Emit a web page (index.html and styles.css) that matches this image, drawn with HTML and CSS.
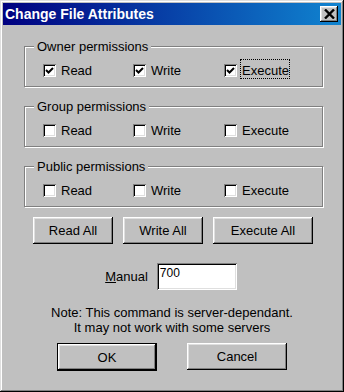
FILE: index.html
```html
<!DOCTYPE html>
<html>
<head>
<meta charset="utf-8">
<link rel="stylesheet" href="styles.css">
</head>
<body>
<div class="window">
  <div class="titlebar">
    <span class="title">Change File Attributes</span>
    <span class="close">
      <svg width="11" height="10" viewBox="0 0 11 10"><path d="M1 0.5 L10 9.5 M10 0.5 L1 9.5" stroke="#000" stroke-width="2.4" fill="none"/></svg>
    </span>
  </div>

  <div class="group group-first">
    <span class="caption">Owner permissions</span>
    <div class="row">
      <label class="cb"><span class="box checked"><svg width="9" height="9" viewBox="0 0 9 9"><path d="M1 4 L3.5 6.5 L8 2" stroke="#000" stroke-width="2" fill="none"/></svg></span><span class="txt">Read</span></label>
      <label class="cb"><span class="box checked"><svg width="9" height="9" viewBox="0 0 9 9"><path d="M1 4 L3.5 6.5 L8 2" stroke="#000" stroke-width="2" fill="none"/></svg></span><span class="txt">Write</span></label>
      <label class="cb"><span class="box checked"><svg width="9" height="9" viewBox="0 0 9 9"><path d="M1 4 L3.5 6.5 L8 2" stroke="#000" stroke-width="2" fill="none"/></svg></span><span class="txt focus">Execute</span></label>
    </div>
  </div>

  <div class="group">
    <span class="caption">Group permissions</span>
    <div class="row">
      <label class="cb"><span class="box"></span><span class="txt">Read</span></label>
      <label class="cb"><span class="box"></span><span class="txt">Write</span></label>
      <label class="cb"><span class="box"></span><span class="txt">Execute</span></label>
    </div>
  </div>

  <div class="group">
    <span class="caption">Public permissions</span>
    <div class="row">
      <label class="cb"><span class="box"></span><span class="txt">Read</span></label>
      <label class="cb"><span class="box"></span><span class="txt">Write</span></label>
      <label class="cb"><span class="box"></span><span class="txt">Execute</span></label>
    </div>
  </div>

  <div class="btnrow">
    <button class="btn w80">Read All</button>
    <button class="btn w80">Write All</button>
    <button class="btn w100">Execute All</button>
  </div>

  <div class="manual">
    <span class="mlabel"><u>M</u>anual</span>
    <input class="field" type="text" value="700">
  </div>

  <div class="note">Note: This command is server-dependant.<br>It may not work with some servers</div>

  <div class="okrow">
    <button class="btn w100 default">OK</button>
    <button class="btn w100">Cancel</button>
  </div>
</div>
</body>
</html>
```

FILE: styles.css
```css
html, body {
  margin: 0;
  padding: 0;
  background: #c0c0c0;
}

.window {
  width: 344px;
  height: 392px;
  box-sizing: border-box;
  background: #c0c0c0;
  box-shadow: inset -1px -1px 0 #000, inset 1px 1px 0 #dfdfdf, inset -2px -2px 0 #808080, inset 2px 2px 0 #fff;
  font-family: "Liberation Sans", Arial, sans-serif;
  font-size: 13px;
  line-height: 15px;
  color: #000;
  display: flex;
  flex-direction: column;
  overflow: hidden;
}

.titlebar {
  margin: 3px 3px 0 3px;
  height: 22px;
  background: linear-gradient(to right, #000080, #1084d0);
  display: flex;
  align-items: center;
  justify-content: space-between;
  padding: 0 3px 0 2px;
}

.title {
  color: #fff;
  font-weight: bold;
  font-size: 14px;
  line-height: 16px;
}

.close {
  width: 18px;
  height: 16px;
  box-sizing: border-box;
  background: #c0c0c0;
  box-shadow: inset -1px -1px 0 #000, inset 1px 1px 0 #fff, inset -2px -2px 0 #808080, inset 2px 2px 0 #dfdfdf;
  display: flex;
  align-items: center;
  justify-content: center;
  padding-left: 1px;
}

.close svg { display: block; }

.group {
  position: relative;
  margin: 19px 0 0 24px;
  width: 299px;
  height: 41px;
  box-sizing: border-box;
  border: 1px solid #808080;
  box-shadow: 1px 1px 0 #fff, inset 1px 1px 0 #fff;
  padding: 16px 0 0 18px;
}

.group-first {
  margin-top: 21px;
}

.caption {
  position: absolute;
  top: -8px;
  left: 9px;
  padding: 0 3px;
  background: #c0c0c0;
  white-space: nowrap;
}

.row {
  display: grid;
  grid-template-columns: 90px 91px 1fr;
  height: 15px;
}

.cb {
  display: flex;
  align-items: center;
  height: 15px;
}

.box {
  width: 13px;
  height: 13px;
  box-sizing: border-box;
  background: #fff;
  box-shadow: inset 1px 1px 0 #808080, inset -1px -1px 0 #fff, inset 2px 2px 0 #000, inset -2px -2px 0 #dfdfdf;
  display: flex;
  align-items: center;
  justify-content: center;
  flex: none;
}

.box svg { display: block; }

.txt {
  margin-left: 5px;
  white-space: nowrap;
}

.txt.focus {
  padding: 4px 1px 1px 2px;
  margin: -4px -1px -1px 3px;
  outline: 1px dotted #000;
  outline-offset: -1px;
}

.btnrow {
  display: flex;
  justify-content: center;
  gap: 10px;
  margin-top: 10px;
  padding-left: 2px;
}

.btn {
  height: 27px;
  box-sizing: border-box;
  border: none;
  background: #c0c0c0;
  box-shadow: inset -1px -1px 0 #000, inset 1px 1px 0 #fff, inset -2px -2px 0 #808080, inset 2px 2px 0 #dfdfdf;
  font-family: "Liberation Sans", Arial, sans-serif;
  font-size: 13px;
  line-height: 15px;
  color: #000;
  padding: 0;
  margin: 0;
}

.w80 { width: 80px; }
.w100 { width: 100px; }

.btn.default {
  height: 28px;
  box-shadow: inset 0 0 0 1px #000, inset -2px -2px 0 #000, inset 2px 2px 0 #fff, inset -3px -3px 0 #808080, inset 3px 3px 0 #dfdfdf;
}

.manual {
  display: flex;
  justify-content: center;
  align-items: center;
  gap: 9px;
  margin-top: 19px;
  padding-right: 2px;
}

.field {
  width: 80px;
  height: 27px;
  box-sizing: border-box;
  border: none;
  background: #fff;
  box-shadow: inset 1px 1px 0 #808080, inset -1px -1px 0 #fff, inset 2px 2px 0 #000, inset -2px -2px 0 #dfdfdf;
  font-family: "Liberation Sans", Arial, sans-serif;
  font-size: 12px;
  padding: 2px 3px 9px 3px;
  margin: 0;
  color: #000;
  outline: none;
}

.note {
  text-align: center;
  margin-top: 15px;
}

.okrow {
  display: flex;
  justify-content: center;
  gap: 30px;
  margin-top: 8px;
}
```
